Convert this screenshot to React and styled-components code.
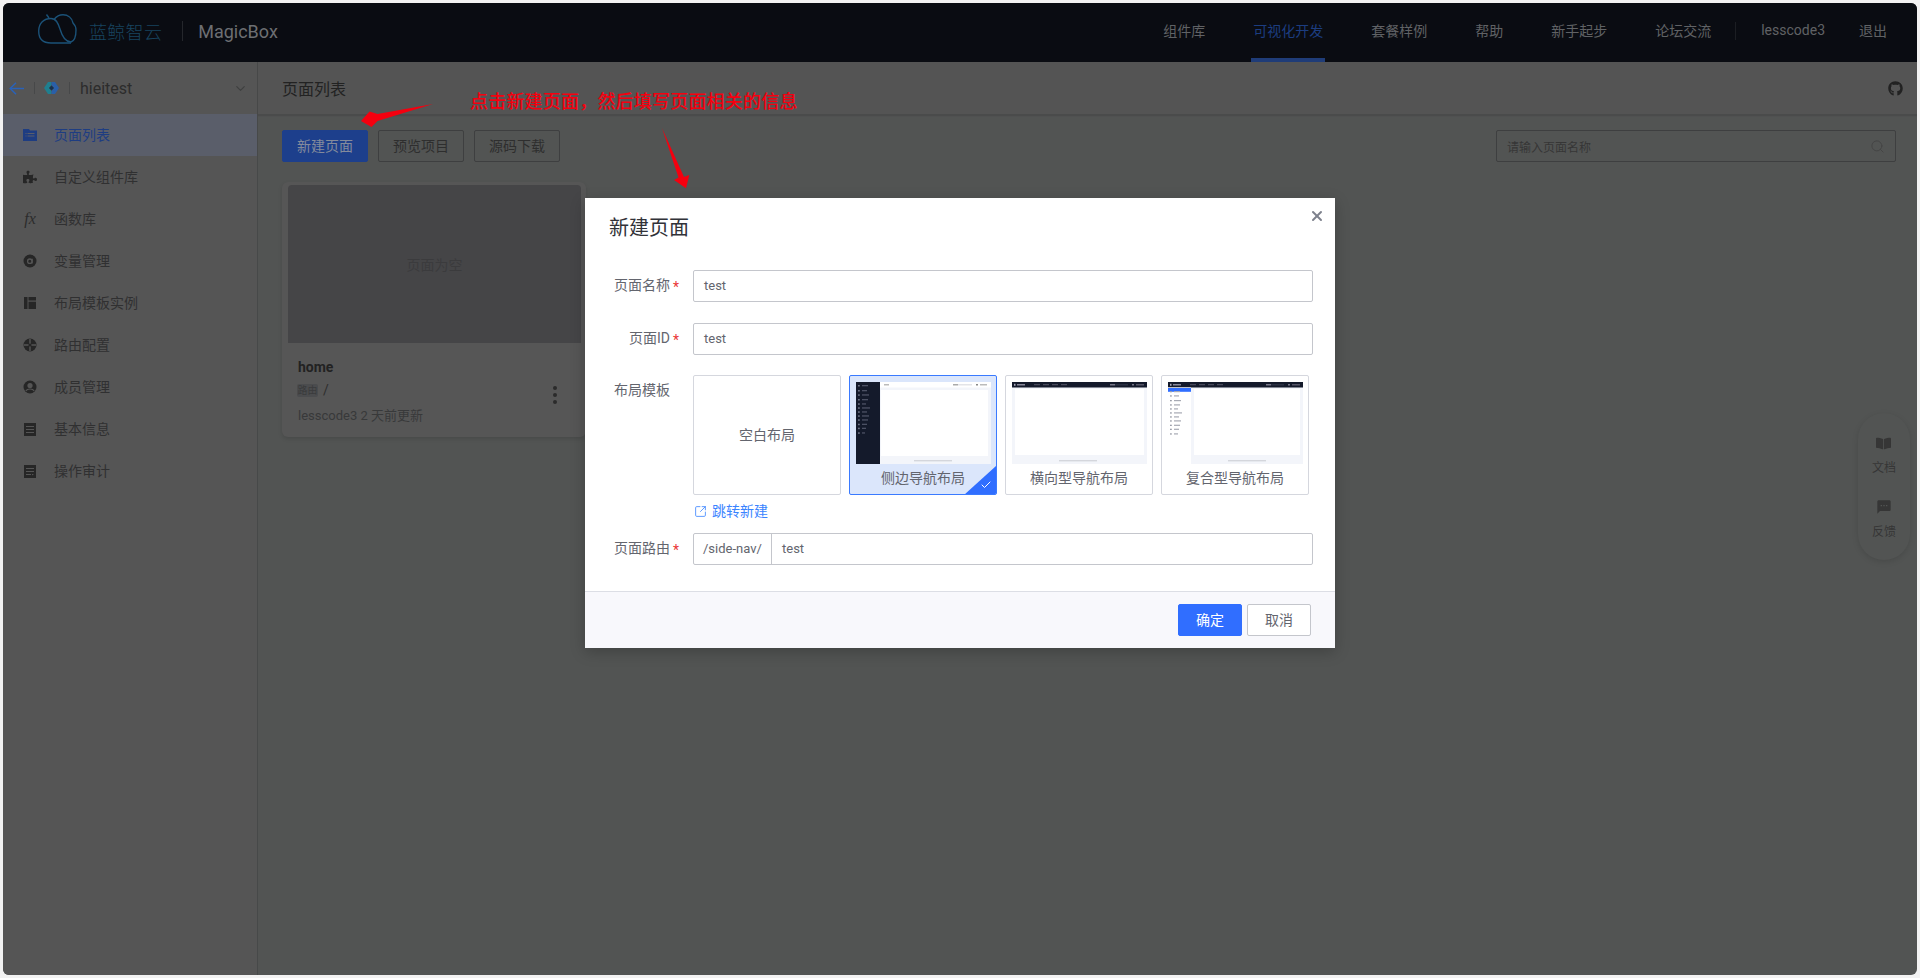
import styled, { createGlobalStyle } from 'styled-components'
import { ChevronDown, Search, X, Check, SquareArrowOutUpRight } from 'lucide-react'
import { FaPuzzlePiece, FaGithub, FaBookOpen } from 'react-icons/fa'
import { MdSms } from 'react-icons/md'

const GlobalStyle = createGlobalStyle`
  html, body {
    margin: 0;
    overflow: hidden;
    background: #f2f2f2;
  }
  * {
    box-sizing: border-box;
  }
  body {
    font-family: Roboto, "Noto Sans CJK SC", sans-serif;
  }
`

const Frame = styled.div`
  position: relative;
  width: 1920px;
  height: 978px;
  padding: 3px;
`
const Win = styled.div`
  position: relative;
  display: flex;
  flex-direction: column;
  width: 1914px;
  height: 972px;
  border-radius: 6px;
  overflow: hidden;
  background: #525453;
`

/* top bar */
const Header = styled.header`
  display: flex;
  align-items: center;
  flex: none;
  height: 59px;
  padding: 0 30px 0 35px;
  background: #0a0c12;
`
const LogoMark = styled.span`
  display: flex;
  margin-bottom: 8px;
`
const LogoText = styled.span`
  margin: 0 0 3px 12px;
  font-size: 18px;
  font-weight: 300;
  letter-spacing: 0.3px;
  color: #18445f;
`
const HeaderRule = styled.span`
  width: 1px;
  height: 20px;
  margin: 0 15px 4px 20px;
  background: #25272c;
`
const Brand = styled.span`
  margin-bottom: 3px;
  font-size: 18px;
  color: #6d6f72;
`
const Nav = styled.nav`
  display: flex;
  align-items: stretch;
  align-self: stretch;
  margin-left: auto;
`
const NavItem = styled.a`
  display: flex;
  align-items: center;
  margin-left: ${p => p.$gap ?? 48}px;
  padding: 0 ${p => (p.$active ? 2 : 0)}px 2px;
  ${p => p.$active && 'margin-right: -2px; margin-left: 46px;'}
  border-bottom: 4px solid ${p => (p.$active ? '#1f3c78' : 'transparent')};
  font-size: 14px;
  color: ${p => (p.$active ? '#1c3d80' : '#606265')};
`
const NavRule = styled.span`
  align-self: center;
  width: 1px;
  height: 18px;
  margin: 0 0 4px 24px;
  background: #1c1e23;
`

/* body */
const Body = styled.div`
  display: flex;
  flex: 1;
  min-height: 0;
`
const Sidebar = styled.aside`
  flex: none;
  width: 255px;
  background: #555555;
  border-right: 1px solid #474949;
`
const ProjectRow = styled.div`
  display: flex;
  align-items: center;
  height: 52px;
  padding: 0 9px 0 6px;
  color: #2c2c2c;
`
const ProjectRule = styled.span`
  width: 1px;
  height: 12px;
  margin: 0 ${p => p.$right}px 0 10px;
  background: #474849;
`
const ProjectName = styled.span`
  flex: 1;
  font-size: 16px;
`
const MenuRow = styled.div`
  display: flex;
  align-items: center;
  gap: 17px;
  height: 42px;
  padding: 0 0 2px 20px;
  font-size: 14px;
  color: ${p => (p.$active ? '#1e3d82' : '#303031')};
  background: ${p => (p.$active ? '#5a5e6a' : 'transparent')};
`
const MenuIcon = styled.span`
  display: flex;
  align-items: center;
  justify-content: center;
  flex: none;
  width: 14px;
  height: 14px;
  margin-top: 2px;
  color: ${p => (p.$active ? '#1e3d82' : '#262626')};
`
const Fx = styled.span`
  font-family: "Liberation Serif", serif;
  font-style: italic;
  font-size: 16px;
  color: #2c2c2c;
`

const Main = styled.main`
  display: flex;
  flex-direction: column;
  flex: 1;
  min-width: 0;
`
const MainHead = styled.div`
  display: flex;
  align-items: center;
  justify-content: space-between;
  flex: none;
  height: 52px;
  padding: 0 14px 0 24px;
  background: #545454;
  box-shadow: 0 2px 1px #4a4b4b;
  font-size: 16px;
  color: #222;
`
const GithubLink = styled.span`
  display: flex;
  color: #222;
`
const MainBody = styled.div`
  position: relative;
  flex: 1;
  padding: 16px 21px 0 24px;
`
const Toolbar = styled.div`
  display: flex;
  align-items: center;
  gap: 10px;
`
const PageButton = styled.button`
  width: 86px;
  height: 32px;
  padding: 0 0 2px;
  border: 1px solid ${p => (p.$primary ? '#1d3f8c' : '#3e3f40')};
  border-radius: 2px;
  background: ${p => (p.$primary ? '#1d3f8c' : 'transparent')};
  font: inherit;
  font-size: 14px;
  color: ${p => (p.$primary ? '#848b9c' : '#2e2e2e')};
`
const SearchBox = styled.div`
  display: flex;
  align-items: center;
  justify-content: space-between;
  width: 400px;
  height: 32px;
  margin-left: auto;
  padding: 0 10px;
  border: 1px solid #3e3f40;
  border-radius: 2px;
  font-size: 12px;
  color: #363636;
`
const Card = styled.article`
  position: relative;
  width: 304px;
  height: 255px;
  margin-top: 20px;
  padding: 3px 5px 0 6px;
  border-radius: 6px;
  background: #565656;
  box-shadow: 0 2px 4px rgba(0, 0, 0, 0.12);
`
const CardThumb = styled.div`
  display: flex;
  align-items: center;
  justify-content: center;
  height: 158px;
  border-radius: 4px 4px 0 0;
  background: #454547;
  font-size: 14px;
  color: #3b3b3d;
`
const CardName = styled.div`
  margin: 14px 0 0 10px;
  font-size: 14px;
  line-height: 20px;
  font-weight: 700;
  color: #222;
`
const CardRoute = styled.div`
  display: flex;
  align-items: center;
  gap: 5px;
  margin: 6px 0 0 9px;
  font-size: 14px;
  line-height: 14px;
  color: #2e2e2e;
`
const RouteTag = styled.span`
  width: 21px;
  height: 13px;
  border-radius: 2px;
  background: #4b4c4e;
  text-align: center;
  font-size: 10px;
  line-height: 13px;
  color: #3a3b3c;
`
const CardMeta = styled.div`
  margin: 9px 0 0 10px;
  font-size: 13px;
  line-height: 20px;
  color: #38393a;
`
const Kebab = styled.div`
  position: absolute;
  right: 29px;
  bottom: 33px;
  display: flex;
  flex-direction: column;
  gap: 3px;
`
const KebabDot = styled.i`
  width: 4px;
  height: 4px;
  border-radius: 50%;
  background: #2b2b2b;
`
const HelpPill = styled.div`
  position: absolute;
  top: 299px;
  right: 7px;
  display: flex;
  flex-direction: column;
  align-items: center;
  gap: 23px;
  width: 52px;
  height: 147px;
  padding-top: 23px;
  border-radius: 26px;
  background: #525453;
  box-shadow: 0 2px 6px rgba(0, 0, 0, 0.12);
`
const HelpItem = styled.div`
  display: flex;
  flex-direction: column;
  align-items: center;
  gap: 9px;
  font-size: 12px;
  line-height: 16px;
  color: #363636;
`

/* dialog */
const Mask = styled.div`
  position: absolute;
  inset: 0;
  display: flex;
  justify-content: center;
  align-items: flex-start;
  padding-top: 195px;
`
const Dialog = styled.section`
  position: relative;
  width: 750px;
  height: 450px;
  background: #fff;
  box-shadow: 0 4px 14px rgba(0, 0, 0, 0.22);
`
const CloseButton = styled.span`
  position: absolute;
  top: 10px;
  right: 10px;
  display: flex;
  color: #7d818c;
`
const DialogTitle = styled.h2`
  margin: 0;
  padding: 15px 24px 27px;
  font-size: 20px;
  line-height: 30px;
  font-weight: 400;
  color: #313238;
`
const Row = styled.div`
  display: flex;
  margin-bottom: ${p => p.$after ?? 0}px;
  padding-left: 23px;
`
const Label = styled.label`
  position: relative;
  flex: none;
  width: 85px;
  padding-right: 23px;
  text-align: right;
  font-size: 14px;
  line-height: 31px;
  color: #63656e;
  ${p =>
    p.$required &&
    `&::after {
      content: '*';
      position: absolute;
      left: 65px;
      top: 2px;
      color: #ea3636;
      font-size: 14px;
    }`}
`
const TextField = styled.div`
  display: flex;
  width: 620px;
  height: 32px;
  border: 1px solid #c4c6cc;
  border-radius: 2px;
  font-size: 13px;
  line-height: 30px;
  color: #63656e;
`
const FieldValue = styled.span`
  padding: 0 10px;
`
const FieldPrefix = styled.span`
  flex: none;
  width: 78px;
  padding-left: 9px;
  border-right: 1px solid #c4c6cc;
`
const TemplateList = styled.div`
  display: flex;
  gap: 8px;
`
const TemplateCard = styled.div`
  position: relative;
  display: flex;
  flex-direction: column;
  align-items: center;
  justify-content: ${p => (p.$blank ? 'center' : 'flex-start')};
  width: 148px;
  height: 120px;
  padding: ${p => (p.$blank ? '0 0 2px' : '6px 6px 0')};
  border: 1px solid ${p => (p.$active ? '#3a7aff' : '#d5d7de')};
  border-radius: 2px;
  background: ${p => (p.$active ? '#dbe6fb' : '#fff')};
  font-size: 14px;
  color: #63656e;
  overflow: hidden;
`
const TemplateName = styled.span`
  margin-top: 4px;
  line-height: 20px;
`
const Corner = styled.span`
  position: absolute;
  right: -1px;
  bottom: -1px;
  width: 33px;
  height: 30px;
  background: #306eff;
  clip-path: polygon(100% 0, 100% 100%, 0 100%);
`
const CornerCheck = styled.span`
  position: absolute;
  right: 4px;
  bottom: 3px;
  display: flex;
  color: #fff;
`
const JumpLink = styled.a`
  display: flex;
  align-items: center;
  gap: 5px;
  margin: 5px 0 11px 1px;
  font-size: 14px;
  line-height: 22px;
  color: #3a84ff;
`
const DialogFooter = styled.footer`
  position: absolute;
  left: 0;
  right: 0;
  bottom: 0;
  display: flex;
  justify-content: flex-end;
  gap: 5px;
  height: 57px;
  padding: 12px 24px 0 0;
  border-top: 1px solid #dcdee5;
  background: #f8f8fc;
`
const DialogButton = styled.button`
  width: 64px;
  height: 32px;
  padding: 0 0 2px;
  border: 1px solid ${p => (p.$primary ? '#306eff' : '#c4c6cc')};
  border-radius: 2px;
  background: ${p => (p.$primary ? '#306eff' : '#fff')};
  font: inherit;
  font-size: 14px;
  color: ${p => (p.$primary ? '#fff' : '#63656e')};
`

/* red notes drawn on the screenshot */
const NoteText = styled.div`
  position: absolute;
  left: 470px;
  top: 87px;
  font-family: "Noto Sans CJK SC", sans-serif;
  font-size: 18px;
  line-height: 26px;
  font-weight: 500;
  letter-spacing: 0.2px;
  color: #f5000f;
  white-space: nowrap;
`
const NoteArrows = styled.svg`
  position: absolute;
  left: 0;
  top: 0;
`

const CloudLogo = () => (
  <svg width="39" height="30" viewBox="0 0 39 30" fill="none" stroke="#1b5278" strokeWidth="1.4">
    <path d="M13 29C5 29 .7 25 .7 17S6 4.500 13 4.500c5 0 7 4.500 9 10.500 2 7 5 13 11 13 3 -1 5 -6 5 -12 0-3-1-5-3-7C34 4 30 .8 25 .8c-4 0-7 2.200-9 4.700" />
    <path d="M13 29h20" />
    <path d="M11 4l-2.500-3.500" />
  </svg>
)

const BackArrow = () => (
  <svg width="15" height="13" viewBox="0 0 15 13" fill="none" stroke="#2a62b8" strokeWidth="1.500">
    <path d="M15 6.500H1.200" />
    <path d="M7 .7L1.200 6.500 7 12.300" />
  </svg>
)

const ProjectLogo = () => (
  <svg width="15" height="12" viewBox="0 0 15 12">
    <path d="M4 0h3.500v3L5 6l2.500 3v3H4L0 6z" fill="#1f7f8f" />
    <path d="M11 0H7.500v3L10 6 7.500 9v3H11l4-6z" fill="#2a5fa8" />
    <path d="M7.500 3.500L10 6l-2.500 2.500L5 6z" fill="#16324f" />
  </svg>
)

const ListIcon = () => (
  <svg width="14" height="12" viewBox="0 0 14 12" fill="currentColor">
    <path d="M0 0h6l1 1.500h7V12H0zM2.500 4v1h1V4zm2 0v1h7V4zm-2 2.500v1h1v-1zm2 0v1h7v-1z" fillRule="evenodd" />
  </svg>
)
const VarIcon = () => (
  <svg width="14" height="14" viewBox="0 0 14 14">
    <circle cx="7" cy="7" r="6.500" fill="currentColor" />
    <circle cx="6.800" cy="7.200" r="2.200" fill="none" stroke="#555" strokeWidth="1.300" />
    <path d="M9.200 4.800v4.800" stroke="#555" strokeWidth="1.200" />
  </svg>
)
const QuiltIcon = () => (
  <svg width="12" height="12" viewBox="0 0 12 12" fill="currentColor">
    <rect x="0" y="0" width="3.500" height="12" />
    <rect x="4.500" y="0" width="7.500" height="3.500" />
    <rect x="4.500" y="4.700" width="7.500" height="7.300" />
  </svg>
)
const RouteIcon = () => (
  <svg width="14" height="14" viewBox="0 0 14 14">
    <circle cx="7" cy="7" r="6.500" fill="currentColor" />
    <path d="M7 1v12M1 7h12" stroke="#555" strokeWidth="1.400" />
    <circle cx="7" cy="7" r="1.600" fill="currentColor" />
  </svg>
)
const UserIcon = () => (
  <svg width="14" height="14" viewBox="0 0 14 14">
    <circle cx="7" cy="7" r="6.500" fill="currentColor" />
    <circle cx="7" cy="5.500" r="2.600" fill="#555" />
    <path d="M2.800 11c.8-1.500 2-2 4.200-2s3.400.5 4.200 2" fill="none" stroke="#555" strokeWidth="1.200" />
  </svg>
)
const InfoIcon = () => (
  <svg width="12" height="13" viewBox="0 0 12 13" fill="currentColor">
    <path d="M0 0h12v13H0zM2 3v1h8V3zm0 3v1h8V6zm0 3v1h8V9z" fillRule="evenodd" />
  </svg>
)
const AuditIcon = () => (
  <svg width="12" height="13" viewBox="0 0 12 13" fill="currentColor">
    <path d="M0 0h12v13H0zM2 3v1h8V3zm0 3v1h8V6zm0 3v1h5V9zm6 1.500l2-1.500H8z" fillRule="evenodd" />
  </svg>
)

const menu = [
  { name: '页面列表', icon: <ListIcon />, active: true },
  { name: '自定义组件库', icon: <FaPuzzlePiece size={14} /> },
  { name: '函数库', icon: <Fx>fx</Fx> },
  { name: '变量管理', icon: <VarIcon /> },
  { name: '布局模板实例', icon: <QuiltIcon /> },
  { name: '路由配置', icon: <RouteIcon /> },
  { name: '成员管理', icon: <UserIcon /> },
  { name: '基本信息', icon: <InfoIcon /> },
  { name: '操作审计', icon: <AuditIcon /> },
]

const sideRows = [3, 8, 12.300, 17, 21.300, 25.300, 29.300, 33.300, 37.300, 41.700, 45.700, 50.300]
const rowWidths = [6, 5, 7, 6, 4, 8, 5, 7, 6, 5, 4, 3]

const MiniTop = () => (
  <>
    <rect x="0" y="0" width="135" height="5.500" fill="#141a2b" />
    <rect x="2" y="1.800" width="1.500" height="2" fill="#aab" />
    <rect x="5" y="2" width="8" height="1.500" fill="#889" />
    {[22, 31, 40, 49].map(x => (
      <rect key={x} x={x} y="2.200" width="6" height="1" fill="#556" />
    ))}
    <rect x="98" y="2" width="5" height="1.500" fill="#778" />
    <rect x="103" y="2" width="13" height="1.500" fill="#2a3042" />
    <rect x="120" y="2" width="2" height="1.500" fill="#778" />
    <rect x="124" y="2" width="8" height="1.500" fill="#556" />
  </>
)
const MiniFooter = ({ x }) => <rect x={x} y="78.500" width="38" height="0.700" fill="#b5b7be" />

const MiniLayout = ({ kind }) => (
  <svg width="135" height="82" viewBox="0 0 135 82">
    <rect width="135" height="82" fill="#f3f5fa" />
    {kind === 'side' && (
      <>
        <rect x="0" width="24" height="82" fill="#141a2b" />
        <rect x="24" width="111" height="5.500" fill="#fff" />
        <rect x="28" y="2" width="5" height="1.500" fill="#bbb" />
        <rect x="97" y="2" width="5" height="1.500" fill="#aaa" />
        <rect x="102" y="2" width="14" height="1.500" fill="#e3e4e8" />
        <rect x="120" y="2" width="2" height="1.500" fill="#888" />
        <rect x="124" y="2" width="7" height="1.500" fill="#bbb" />
        <rect x="25" y="8" width="107" height="66" fill="#fff" />
        {sideRows.map((y, i) => (
          <g key={y}>
            <rect x="2" y={y} width="1.800" height="1.500" fill="#6e7385" />
            <rect x="6" y={y} width={rowWidths[i]} height="1.300" fill="#4c5164" />
          </g>
        ))}
        <MiniFooter x="58" />
      </>
    )}
    {kind === 'top' && (
      <>
        <MiniTop />
        <rect x="3" y="7" width="129" height="66" fill="#fff" />
        <MiniFooter x="47" />
      </>
    )}
    {kind === 'mix' && (
      <>
        <MiniTop />
        <rect x="0" y="5.500" width="23" height="76.500" fill="#fff" />
        <rect x="0" y="6" width="23" height="3.800" fill="#306eff" />
        <rect x="26" y="7" width="106" height="66" fill="#fff" />
        {sideRows.slice(1).map((y, i) => (
          <g key={y}>
            <rect x="2" y={y + 1} width="1.800" height="1.300" fill="#9a9da8" />
            <rect x="6" y={y + 1} width={rowWidths[i]} height="1.200" fill="#a7aab4" />
          </g>
        ))}
        <MiniFooter x="60" />
      </>
    )}
  </svg>
)

const templates = [
  { name: '侧边导航布局', kind: 'side', active: true },
  { name: '横向型导航布局', kind: 'top' },
  { name: '复合型导航布局', kind: 'mix' },
]

const topNav = ['组件库', '可视化开发', '套餐样例', '帮助', '新手起步', '论坛交流']

const App = () => (
  <Frame>
    <GlobalStyle />
    <Win>
      <Header>
        <LogoMark>
          <CloudLogo />
        </LogoMark>
        <LogoText>蓝鲸智云</LogoText>
        <HeaderRule />
        <Brand>MagicBox</Brand>
        <Nav>
          {topNav.map(item => (
            <NavItem key={item} $active={item === '可视化开发'}>
              {item}
            </NavItem>
          ))}
          <NavRule />
          <NavItem $gap={25}>lesscode3</NavItem>
          <NavItem $gap={34}>退出</NavItem>
        </Nav>
      </Header>
      <Body>
        <Sidebar>
          <ProjectRow>
            <BackArrow />
            <ProjectRule $right={9} />
            <ProjectLogo />
            <ProjectRule $right={10} />
            <ProjectName>hieitest</ProjectName>
            <ChevronDown size={15} color="#3f4040" />
          </ProjectRow>
          {menu.map(item => (
            <MenuRow key={item.name} $active={item.active}>
              <MenuIcon $active={item.active}>{item.icon}</MenuIcon>
              {item.name}
            </MenuRow>
          ))}
        </Sidebar>
        <Main>
          <MainHead>
            页面列表
            <GithubLink>
              <FaGithub size={15} />
            </GithubLink>
          </MainHead>
          <MainBody>
            <Toolbar>
              <PageButton $primary>新建页面</PageButton>
              <PageButton>预览项目</PageButton>
              <PageButton>源码下载</PageButton>
              <SearchBox>
                请输入页面名称
                <Search size={15} strokeWidth={1.5} color="#444" />
              </SearchBox>
            </Toolbar>
            <Card>
              <CardThumb>页面为空</CardThumb>
              <CardName>home</CardName>
              <CardRoute>
                <RouteTag>路由</RouteTag>/
              </CardRoute>
              <CardMeta>lesscode3 2 天前更新</CardMeta>
              <Kebab>
                <KebabDot />
                <KebabDot />
                <KebabDot />
              </Kebab>
            </Card>
            <HelpPill>
              <HelpItem>
                <FaBookOpen size={15} />
                文档
              </HelpItem>
              <HelpItem>
                <MdSms size={16} />
                反馈
              </HelpItem>
            </HelpPill>
          </MainBody>
        </Main>
      </Body>
      <Mask>
        <Dialog>
          <CloseButton>
            <X size={16} strokeWidth={3} />
          </CloseButton>
          <DialogTitle>新建页面</DialogTitle>
          <Row $after={21}>
            <Label $required>页面名称</Label>
            <TextField>
              <FieldValue>test</FieldValue>
            </TextField>
          </Row>
          <Row $after={20}>
            <Label $required>页面ID</Label>
            <TextField>
              <FieldValue>test</FieldValue>
            </TextField>
          </Row>
          <Row>
            <Label>布局模板</Label>
            <div>
              <TemplateList>
                <TemplateCard $blank>空白布局</TemplateCard>
                {templates.map(t => (
                  <TemplateCard key={t.kind} $active={t.active}>
                    <MiniLayout kind={t.kind} />
                    <TemplateName>{t.name}</TemplateName>
                    {t.active && (
                      <>
                        <Corner />
                        <CornerCheck>
                          <Check size={12} strokeWidth={2} />
                        </CornerCheck>
                      </>
                    )}
                  </TemplateCard>
                ))}
              </TemplateList>
              <JumpLink>
                <SquareArrowOutUpRight size={13} strokeWidth={1.500} />
                跳转新建
              </JumpLink>
            </div>
          </Row>
          <Row>
            <Label $required>页面路由</Label>
            <TextField>
              <FieldPrefix>/side-nav/</FieldPrefix>
              <FieldValue>test</FieldValue>
            </TextField>
          </Row>
          <DialogFooter>
            <DialogButton $primary>确定</DialogButton>
            <DialogButton>取消</DialogButton>
          </DialogFooter>
        </Dialog>
      </Mask>
    </Win>
    <NoteText>点击新建页面，然后填写页面相关的信息</NoteText>
    <NoteArrows width="1920" height="978" viewBox="0 0 1920 978">
      <polygon points="433,104 377.500,114 369.500,111.500 361,121 371.500,127 377.500,121" fill="#f5000f" />
      <polygon points="662,128 684,177 689.300,175 686,188.300 674,180 678.500,177.500" fill="#f5000f" />
    </NoteArrows>
  </Frame>
)

export default App
